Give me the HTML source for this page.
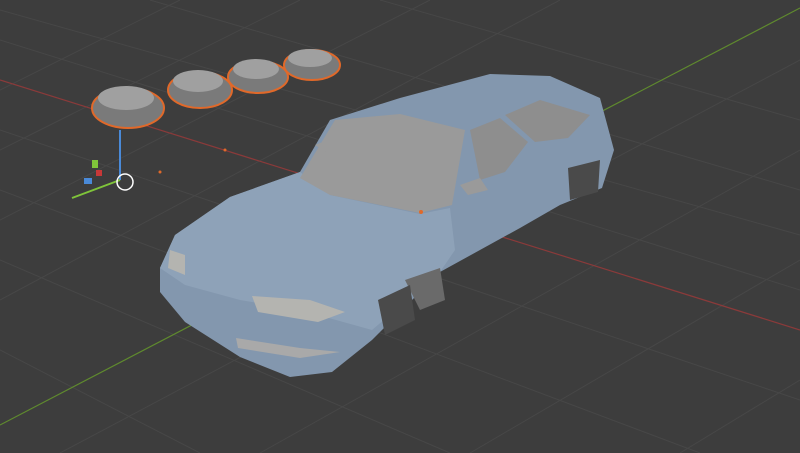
<!DOCTYPE html>
<html><head><meta charset="utf-8"><style>
html,body{margin:0;padding:0;background:#3d3d3d;overflow:hidden}
svg{display:block}
</style></head><body>
<svg width="800" height="453" viewBox="0 0 800 453" xmlns="http://www.w3.org/2000/svg">
<rect width="800" height="453" fill="#3d3d3d"/>
<g stroke="#474747" stroke-width="1" fill="none">
<line x1="0" y1="40" x2="800" y2="290"/>
<line x1="0" y1="130" x2="800" y2="400"/>
<line x1="0" y1="190" x2="700" y2="453"/>
<line x1="0" y1="260" x2="450" y2="453"/>
<line x1="0" y1="350" x2="200" y2="453"/>
<line x1="150" y1="0" x2="800" y2="190"/>
<line x1="380" y1="0" x2="800" y2="120"/>
<line x1="0" y1="10" x2="800" y2="235"/>
<line x1="0" y1="300" x2="560" y2="0"/>
<line x1="0" y1="220" x2="430" y2="0"/>
<line x1="0" y1="150" x2="300" y2="0"/>
<line x1="0" y1="90" x2="180" y2="0"/>
<line x1="60" y1="453" x2="800" y2="60"/>
<line x1="260" y1="453" x2="800" y2="150"/>
<line x1="470" y1="453" x2="800" y2="260"/>
<line x1="680" y1="453" x2="800" y2="380"/>
</g>
<line x1="0" y1="80" x2="800" y2="330" stroke="#8a3a3a" stroke-width="1.2"/>
<line x1="0" y1="425" x2="800" y2="8" stroke="#5f8a2e" stroke-width="1.2"/>
<!-- wheels -->
<g stroke="#e0692a" stroke-width="2" fill="#7a7a7a">
<ellipse cx="312" cy="65" rx="28" ry="15"/>
<ellipse cx="258" cy="77" rx="30" ry="16"/>
<ellipse cx="200" cy="90" rx="32" ry="18"/>
<ellipse cx="128" cy="108" rx="36" ry="20"/>
</g>
<g fill="#a0a0a0">
<ellipse cx="310" cy="58" rx="22" ry="9"/>
<ellipse cx="256" cy="69" rx="23" ry="10"/>
<ellipse cx="198" cy="81" rx="25" ry="11"/>
<ellipse cx="126" cy="98" rx="28" ry="12"/>
</g>
<!-- gizmo -->
<line x1="120" y1="180" x2="120" y2="130" stroke="#4a8ad8" stroke-width="2"/>
<line x1="120" y1="180" x2="72" y2="198" stroke="#7fc43a" stroke-width="2"/>
<rect x="92" y="160" width="6" height="8" fill="#7fc43a"/>
<rect x="84" y="178" width="8" height="6" fill="#4a8ad8"/>
<rect x="96" y="170" width="6" height="6" fill="#c83838"/>
<circle cx="125" cy="182" r="8" fill="none" stroke="#fff" stroke-width="1.5"/>
<!-- car -->
<path d="M160,268 L175,235 L230,197 L300,172 L330,120 L400,98 L490,74 L550,76 L600,98 L614,150 L602,188 L560,205 L520,228 L440,272 L372,340 L332,372 L290,377 L240,357 L185,322 L160,292 Z" fill="#8397ae"/>
<path d="M160,268 L175,235 L230,197 L300,172 L330,195 L420,214 L450,208 L455,250 L440,272 L372,330 L300,310 L240,300 L185,285 Z" fill="#8ea2b8"/>
<path d="M300,178 L335,120 L400,114 L465,130 L452,205 L420,213 L330,195 Z" fill="#9a9a9a"/>
<path d="M470,130 L500,118 L528,142 L505,172 L480,180 Z" fill="#8e8e8e"/>
<path d="M505,115 L540,100 L590,115 L568,138 L535,142 Z" fill="#8e8e8e"/>
<path d="M170,250 L185,255 L185,275 L168,268 Z" fill="#b4b4b0"/>
<path d="M252,296 L310,300 L345,312 L318,322 L258,312 Z" fill="#b4b4b0"/>
<path d="M236,338 L300,348 L340,352 L300,358 L238,348 Z" fill="#a9a9a9"/>
<path d="M405,280 L440,268 L445,300 L420,310 Z" fill="#6a6a6a"/>
<path d="M378,300 L410,285 L415,320 L385,335 Z" fill="#4a4a4a"/>
<path d="M568,168 L600,160 L598,192 L570,200 Z" fill="#4a4a4a"/>
<path d="M460,185 L480,178 L488,190 L468,195 Z" fill="#9a9a9a"/>
<path d="M315,145 L328,140 L326,152 Z" fill="#9a9a9a"/>
<circle cx="421" cy="212" r="2" fill="#e0692a"/>
<circle cx="225" cy="150" r="1.5" fill="#e0692a"/>
<circle cx="160" cy="172" r="1.5" fill="#e0692a"/>
</svg>
</body></html>
